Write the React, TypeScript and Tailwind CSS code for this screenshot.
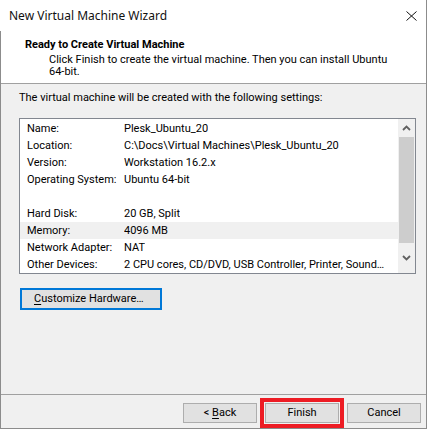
import React from "react";

const rows: { label: string; value: string; hl?: boolean }[] = [
  { label: "Name:", value: "Plesk_Ubuntu_20" },
  { label: "Location:", value: "C:\\Docs\\Virtual Machines\\Plesk_Ubuntu_20" },
  { label: "Version:", value: "Workstation 16.2.x" },
  { label: "Operating System:", value: "Ubuntu 64-bit" },
  { label: "", value: "" },
  { label: "Hard Disk:", value: "20 GB, Split" },
  { label: "Memory:", value: "4096 MB", hl: true },
  { label: "Network Adapter:", value: "NAT" },
  { label: "Other Devices:", value: "2 CPU cores, CD/DVD, USB Controller, Printer, Sound…" },
];

function Chevron({ up }: { up?: boolean }) {
  return (
    <svg width="9" height="6" viewBox="0 0 9 6" className="block">
      <polyline
        points={up ? "1,5 4.5,1.5 8,5" : "1,1 4.5,4.5 8,1"}
        fill="none"
        stroke="#606060"
        strokeWidth="1.8"
      />
    </svg>
  );
}

export default function App() {
  return (
    <div className="w-[428px] h-[430px] bg-white text-black font-['Roboto',sans-serif] text-[11px]">
      <div className="w-[427px] h-[429px] border-r border-[#8c8c8c] flex flex-col">
        {/* Title bar */}
        <div className="h-[31px] shrink-0 bg-white flex items-center justify-between pl-[9px] pr-[9px]">
          <span className="font-['Noto_Sans',sans-serif] text-[12px] leading-[16px] text-[#111]">New Virtual Machine Wizard</span>
          <svg width="11" height="10" viewBox="0 0 11 10">
            <path d="M0.5 0.5 L10.5 9.5 M10.5 0.5 L0.5 9.5" stroke="#111" strokeWidth="1" />
          </svg>
        </div>

        <div className="flex-1 flex flex-col border-l border-b border-[#8c8c8c] bg-[#f0f0f0]">
          {/* Header */}
          <div className="h-[53px] shrink-0 bg-white border-b border-[#a0a0a0] pt-[7px] pl-[24px]">
            <p className="font-bold leading-[13px]">Ready to Create Virtual Machine</p>
            <p className="mt-[3px] pl-[24px] pr-[16px] leading-[12px]">
              Click Finish to create the virtual machine. Then you can install Ubuntu{" "}
              <span className="whitespace-nowrap">64-bit.</span>
            </p>
          </div>

          {/* Body */}
          <div className="flex-1 flex flex-col pl-[18px]">
            <p className="mt-[7px] leading-[13px]">The virtual machine will be created with the following settings:</p>

            <div className="mt-[14px] w-[397px] h-[156px] border border-[#828790] bg-white flex">
              <div className="flex-1 pt-px min-w-0">
                {rows.map((r, i) => (
                  <div
                    key={i}
                    className={`h-[17px] leading-[17px] flex pl-[7px] ${r.hl ? "bg-[#f0f0f0]" : ""}`}
                  >
                    <span className="w-[97px] shrink-0">{r.label}</span>
                    <span className="truncate">{r.value}</span>
                  </div>
                ))}
              </div>
              {/* Scrollbar */}
              <div className="w-[17px] shrink-0 bg-[#f0f0f0] flex flex-col">
                <div className="h-[18px] flex items-center justify-center">
                  <Chevron up />
                </div>
                <div className="h-[106px] mx-px bg-[#cdcdcd]" />
                <div className="flex-1 flex items-center justify-center">
                  <Chevron />
                </div>
              </div>
            </div>

            <button className="mt-[14px] ml-px w-[142px] h-[22px] border-2 border-[#0078d7] bg-[#e1e1e1] text-left pl-[12px] leading-[16px]">
              <span className="underline underline-offset-2">C</span>ustomize Hardware…
            </button>
          </div>

          {/* Footer */}
          <div className="h-[34px] shrink-0 border-t border-[#a0a0a0] flex items-start justify-end pt-[8px] pr-[5px] gap-[8px]">
            <button className="w-[74px] h-[20px] border border-[#adadad] bg-[#e1e1e1] leading-[16px]">
              &lt; <span className="underline underline-offset-2">B</span>ack
            </button>
            <div className="relative">
              <button className="w-[74px] h-[20px] border border-[#adadad] bg-[#e1e1e1] leading-[16px]">
                Finish
              </button>
              <div className="absolute -left-[5px] -right-[5px] -top-[5px] -bottom-[5px] border-[4px] border-[#ed1c24] pointer-events-none" />
            </div>
            <button className="w-[74px] h-[20px] border border-[#adadad] bg-[#e1e1e1] leading-[16px]">
              Cancel
            </button>
          </div>
        </div>
      </div>
    </div>
  );
}
